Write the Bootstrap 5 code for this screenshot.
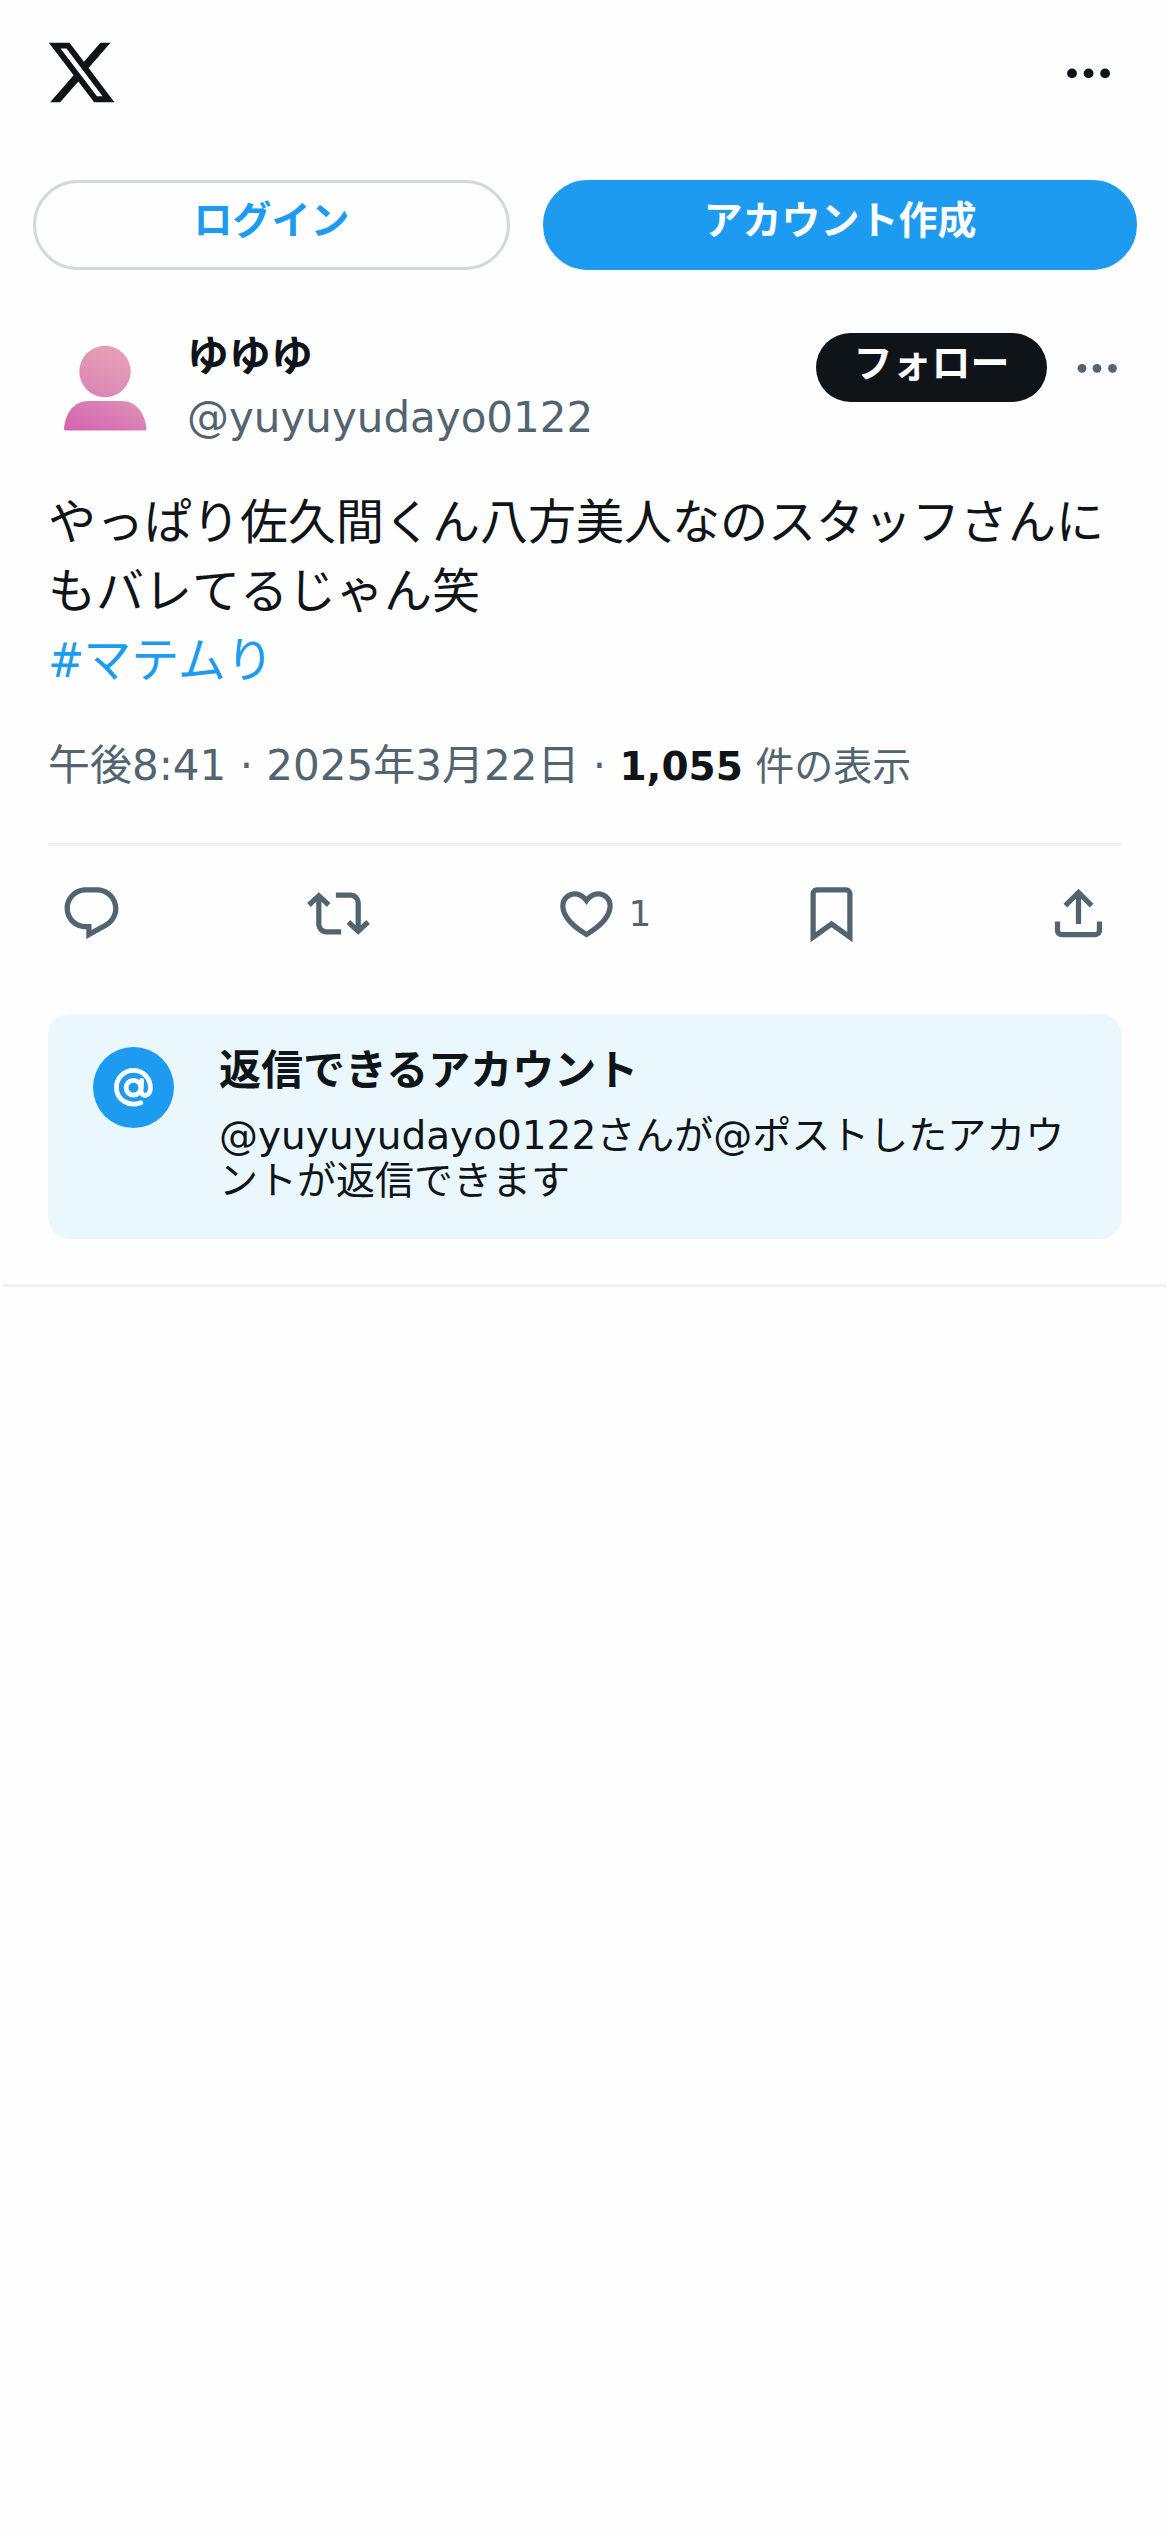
<!DOCTYPE html>
<html lang="ja">
<head>
<meta charset="utf-8">
<meta name="viewport" content="width=device-width, initial-scale=1">
<title>ゆゆゆ / X</title>
<link href="https://cdn.jsdelivr.net/npm/bootstrap@5.3.0/dist/css/bootstrap.min.css" rel="stylesheet">
<style>
  body { background: #fefefe; color: #0f1419; font-family: "DejaVu Sans", "Noto Sans CJK JP", sans-serif; min-height: 2532px; }
  svg { display: block; flex: none; }
  a { text-decoration: none; }
  .x-blue { color: #1d9bf0; }
  .x-gray { color: #536471; }
  .x-ink { color: #0f1419; }
  .top-bar { height: 180px; padding: 36px 48px 0 45px; }
  .top-bar .dots { margin: 16px 12px 0 0; }
  .auth-row { padding: 0 33px; gap: 33px; }
  .auth-row .btn { height: 90px; font-size: 39px; line-height: 75px; padding: 0; border-width: 3px; }
  .btn-login { width: 477px; border-color: #cfd9de; color: #1d9bf0; }
  .btn-signup { background: #1d9bf0; border-color: #1d9bf0; color: #fff; }
  .post { padding: 63px 48px 0; }
  .author { height: 155px; }
  .avatar { margin: 9px 16px 0 15px; }
  .display-name { font-size: 42px; line-height: 60px; margin-top: -6px; }
  .handle { font-size: 42px; line-height: 60px; margin-top: 1px; }
  .btn-follow { width: 231px; height: 69px; font-size: 39px; line-height: 61px; padding: 0; border: 0; background: #0f1419; color: #fff; }
  .author .dots { margin: 24px 0 0 25px; }
  .post-text { font-size: 48px; line-height: 69px; white-space: nowrap; }
  .hash { font-family: "DejaVu Sans Condensed", "Noto Sans", sans-serif; line-height: 1; letter-spacing: -1px; }
  .meta { font-size: 42px; line-height: 60px; height: 60px; margin-top: 41px; white-space: pre; }
  .views { font-size: 39px; }
  .rule { height: 3px; background: #eff3f4; }
  .post .rule { margin-top: 47px; }
  .actions { padding: 36px 12px 0; height: 168px; }
  .action { width: 63px; height: 63px; color: #536471; }
  .action.d-flex { padding-left: 1px; }
  .action span { font-size: 36px; line-height: 63px; padding-left: 11px; }
  .notice { background: #eaf8fe; border-radius: 22px; height: 225px; padding: 33px 0 0 45px; gap: 45px; }
  .notice-icon { width: 81px; height: 81px; background: #1d9bf0; }
  .notice-title { font-size: 42px; line-height: 50px; margin-top: -1px; }
  .notice-body { font-size: 39px; line-height: 45px; margin-top: 17px; white-space: nowrap; }
  .end-rule { margin: 45px 3px 0; }
</style>
</head>
<body>
<header class="top-bar d-flex justify-content-between align-items-start">
  <svg width="73" height="73" viewBox="0 0 24 24" fill="#0f1419"><path d="M18.244 2.25h3.308l-7.227 8.26 8.502 11.24H16.17l-5.214-6.817L4.99 21.75H1.68l7.73-8.835L1.254 2.25H8.08l4.713 6.231zm-1.161 17.52h1.833L7.084 4.126H5.117z"/></svg>
  <svg class="dots" width="44" height="44" viewBox="0 0 44 44" fill="#0f1419"><circle cx="6" cy="21.4" r="4.9"/><circle cx="22.6" cy="21.4" r="4.9"/><circle cx="39.1" cy="21.4" r="4.9"/></svg>
</header>

<div class="auth-row d-flex">
  <a class="btn btn-login rounded-pill fw-bold" href="#">ログイン</a>
  <a class="btn btn-signup rounded-pill fw-bold flex-grow-1" href="#">アカウント作成</a>
</div>

<main>
  <article class="post">
    <div class="author d-flex align-items-start">
      <svg class="avatar" width="84" height="93" viewBox="0 0 84 93">
        <defs>
          <linearGradient id="skin" gradientUnits="userSpaceOnUse" x1="60" y1="4" x2="18" y2="92">
            <stop offset="0" stop-color="#e6a3b4"/><stop offset=".5" stop-color="#dd8bb6"/><stop offset="1" stop-color="#d365b0"/>
          </linearGradient>
        </defs>
        <circle cx="42" cy="29.5" r="25.7" fill="url(#skin)"/>
        <path d="M1 87C2 71 11 59 25 59H59C73 59 82 71 83.500 87Q83.500 88.500 82 88.500H2.500Q1 88.500 1 87Z" fill="url(#skin)"/>
      </svg>
      <div class="me-auto ps-4">
        <div class="display-name fw-bold">ゆゆゆ</div>
        <div class="handle x-gray">@yuyuyudayo0122</div>
      </div>
      <a class="btn btn-follow rounded-pill fw-bold" href="#">フォロー</a>
      <svg class="dots" width="50" height="24" viewBox="0 0 50 24" fill="#536471"><circle cx="10" cy="11.300" r="4.400"/><circle cx="25" cy="11.300" r="4.400"/><circle cx="40.500" cy="11.300" r="4.400"/></svg>
    </div>

    <div class="post-text">やっぱり佐久間くん八方美人なのスタッフさんに<br>もバレてるじゃん笑<br><a class="x-blue" href="#"><span class="hash">#</span>マテムり</a></div>

    <div class="meta x-gray">午後8:41 · 2025年3月22日 · <span class="views"><b class="x-ink">1,055</b> 件の表示</span></div>

    <div class="rule"></div>

    <div class="actions d-flex justify-content-between">
      <div class="action"><svg width="63" height="63" viewBox="0 0 24 24" fill="currentColor"><path d="M1.751 10c0-4.42 3.584-8 8.005-8h4.366c4.49 0 8.129 3.64 8.129 8.13 0 2.96-1.607 5.68-4.196 7.11l-8.054 4.46v-3.69h-.067c-4.49.1-8.183-3.51-8.183-8.01zm8.005-6c-3.317 0-6.005 2.69-6.005 6 0 3.37 2.77 6.08 6.138 6.01l.351-.01h1.761v2.3l5.087-2.81c1.951-1.08 3.163-3.13 3.163-5.36 0-3.39-2.744-6.13-6.129-6.13H9.756z"/></svg></div>
      <div class="action"><svg width="63" height="63" viewBox="0 0 24 24" fill="currentColor"><path d="M4.5 3.88l4.432 4.14-1.364 1.46L5.5 7.55V16c0 1.1.896 2 2 2H13v2H7.5c-2.209 0-4-1.79-4-4V7.55L1.432 9.48.068 8.02 4.5 3.88zM16.5 6H11V4h5.5c2.209 0 4 1.79 4 4v8.45l2.068-1.93 1.364 1.46-4.432 4.14-4.432-4.14 1.364-1.46 2.068 1.93V8c0-1.1-.896-2-2-2z"/></svg></div>
      <div class="action d-flex"><svg width="63" height="63" viewBox="0 0 24 24" fill="currentColor"><path d="M16.697 5.5c-1.222-.06-2.679.51-3.89 2.16l-.805 1.09-.806-1.09C9.984 6.01 8.526 5.44 7.304 5.5c-1.243.07-2.349.78-2.91 1.91-.552 1.12-.633 2.78.479 4.82 1.074 1.97 3.257 4.27 7.129 6.61 3.87-2.34 6.052-4.64 7.126-6.61 1.111-2.04 1.03-3.7.477-4.82-.561-1.13-1.666-1.84-2.908-1.91zm4.187 7.69c-1.351 2.48-4.001 5.12-8.379 7.67l-.503.3-.504-.3c-4.379-2.55-7.029-5.19-8.382-7.67-1.36-2.5-1.41-4.86-.514-6.67.887-1.79 2.647-2.91 4.601-3.01 1.651-.09 3.368.56 4.798 2.01 1.429-1.45 3.146-2.1 4.796-2.01 1.954.1 3.714 1.22 4.601 3.01.896 1.81.846 4.17-.514 6.67z"/></svg><span>1</span></div>
      <div class="action"><svg width="63" height="63" viewBox="0 0 24 24" fill="currentColor"><path d="M4 4.5C4 3.12 5.119 2 6.5 2h11C18.881 2 20 3.12 20 4.5v18.44l-8-5.71-8 5.71V4.5zM6.5 4c-.276 0-.5.22-.5.5v14.56l6-4.29 6 4.29V4.5c0-.28-.224-.5-.5-.5h-11z"/></svg></div>
      <div class="action"><svg width="63" height="63" viewBox="0 0 24 24" fill="currentColor"><path d="M12 2.59l5.7 5.7-1.41 1.42L13 6.41V16h-2V6.41l-3.3 3.3-1.41-1.42L12 2.59zM21 15l-.02 3.51c0 1.38-1.12 2.49-2.5 2.49H5.5C4.11 21 3 19.88 3 18.5V15h2v3.5c0 .28.22.5.5.5h12.98c.28 0 .5-.22.5-.5L19 15h2z"/></svg></div>
    </div>

    <section class="notice d-flex align-items-start">
      <div class="notice-icon rounded-circle">
        <svg width="81" height="81" viewBox="0 0 81 81" fill="none" stroke="#fff" stroke-width="4.800" stroke-linecap="round"><circle cx="40.500" cy="40.700" r="7.400"/><path d="M48.700 33.500L48 43.500C47.500 50 57.400 50.500 57.400 41C57.400 31 50 23.400 40.500 23.400C31 23.400 23.400 31 23.400 40.600C23.400 53 35.500 60 47.800 55.700"/></svg>
      </div>
      <div>
        <div class="notice-title fw-bold">返信できるアカウント</div>
        <div class="notice-body">@yuyuyudayo0122さんが@ポストしたアカウ<br>ントが返信できます</div>
      </div>
    </section>
  </article>
  <div class="rule end-rule"></div>
</main>
<script src="https://cdn.jsdelivr.net/npm/bootstrap@5.3.0/dist/js/bootstrap.bundle.min.js"></script>
</body>
</html>
